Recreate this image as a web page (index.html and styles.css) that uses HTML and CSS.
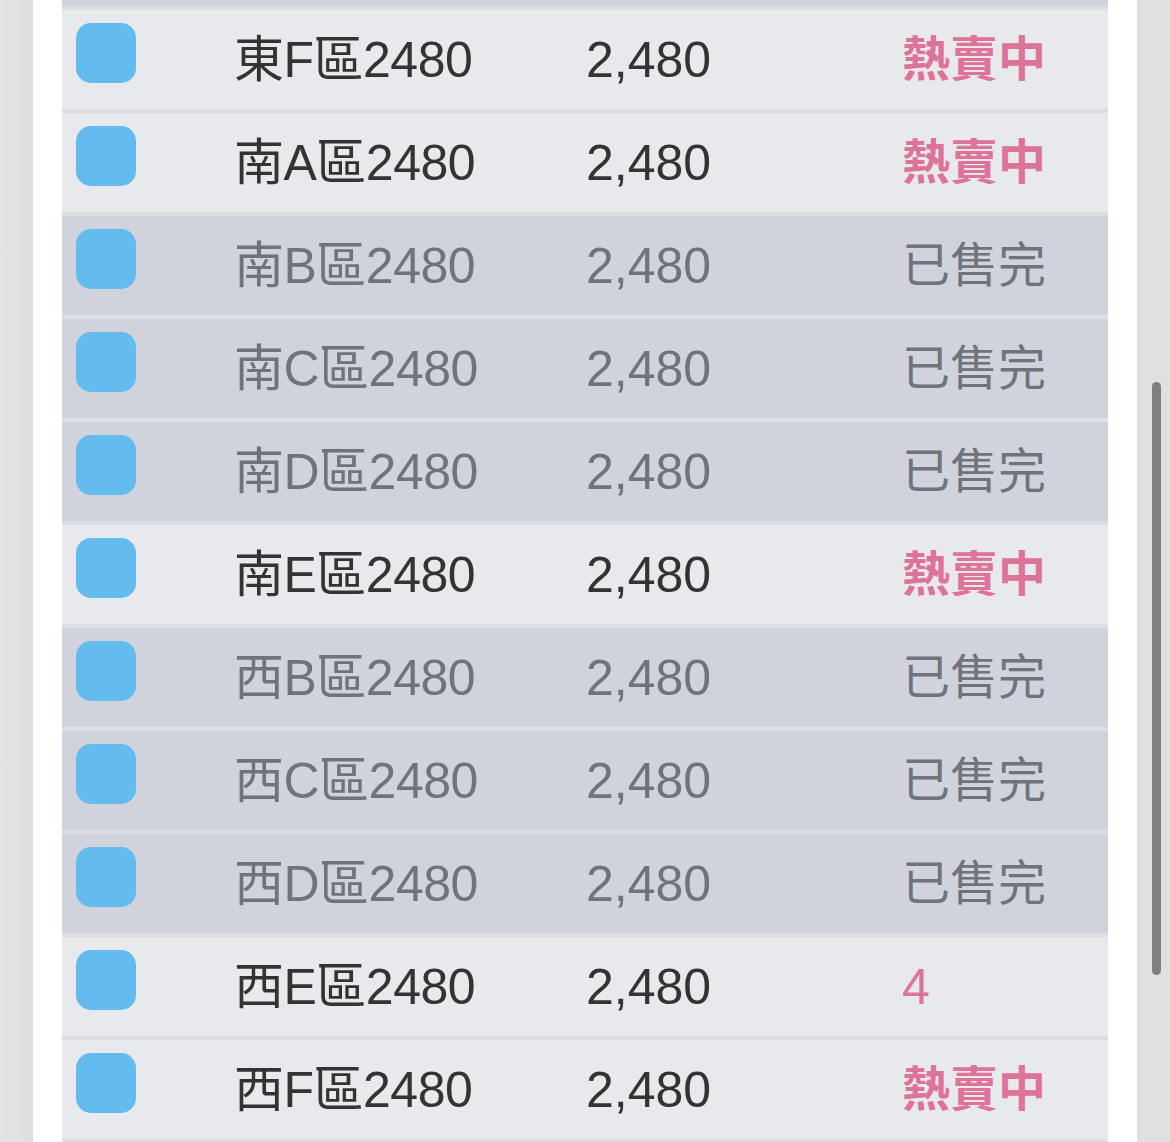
FILE: index.html
```html
<!DOCTYPE html>
<html lang="zh-Hant">
<head>
<meta charset="utf-8">
<link rel="stylesheet" href="styles.css">
</head>
<body>
<div class="screen">
  <div class="side side-left"></div>
  <main class="panel">
    <div class="list">
      <div class="row-edge sold"></div>
      <div class="row"><span class="check"></span><span class="name">東F區2480</span><span class="price">2,480</span><span class="status hot">熱賣中</span></div>
      <div class="row"><span class="check"></span><span class="name">南A區2480</span><span class="price">2,480</span><span class="status hot">熱賣中</span></div>
      <div class="row sold"><span class="check"></span><span class="name">南B區2480</span><span class="price">2,480</span><span class="status">已售完</span></div>
      <div class="row sold"><span class="check"></span><span class="name">南C區2480</span><span class="price">2,480</span><span class="status">已售完</span></div>
      <div class="row sold"><span class="check"></span><span class="name">南D區2480</span><span class="price">2,480</span><span class="status">已售完</span></div>
      <div class="row"><span class="check"></span><span class="name">南E區2480</span><span class="price">2,480</span><span class="status hot">熱賣中</span></div>
      <div class="row sold"><span class="check"></span><span class="name">西B區2480</span><span class="price">2,480</span><span class="status">已售完</span></div>
      <div class="row sold"><span class="check"></span><span class="name">西C區2480</span><span class="price">2,480</span><span class="status">已售完</span></div>
      <div class="row sold"><span class="check"></span><span class="name">西D區2480</span><span class="price">2,480</span><span class="status">已售完</span></div>
      <div class="row"><span class="check"></span><span class="name">西E區2480</span><span class="price">2,480</span><span class="status hot num">4</span></div>
      <div class="row"><span class="check"></span><span class="name">西F區2480</span><span class="price">2,480</span><span class="status hot">熱賣中</span></div>
      <div class="row-edge next"></div>
    </div>
  </main>
  <div class="side side-right"><div class="thumb"></div></div>
</div>
</body>
</html>
```
FILE: styles.css
```css
html, body {
  margin: 0;
  padding: 0;
  height: 100%;
  overflow: hidden;
  background: #e0e0e0;
}
.screen {
  display: flex;
  width: 1170px;
  height: 1142px;
  overflow: hidden;
  font-family: "Liberation Sans", "Noto Sans CJK TC", sans-serif;
}
.side {
  flex: 0 0 33px;
  background: #e0e0e0;
  position: relative;
}
.side-left {
  background: linear-gradient(to right, #e4e4e4, #dedede);
}
.thumb {
  position: absolute;
  left: 15px;
  top: 382px;
  width: 9px;
  height: 593px;
  border-radius: 5px;
  background: #808080;
}
.panel {
  flex: 1;
  background: #ffffff;
  padding: 0 29px;
  overflow: hidden;
}
.row-edge {
  height: 6px;
  background: #e8e9ed;
}
.row-edge.sold {
  background: #d0d3db;
}
.row-edge.next {
  height: 20px;
  border-top: 4px solid #dcdee3;
}
.row {
  display: grid;
  grid-template-columns: 174px 350px 318px 1fr;
  align-items: center;
  height: 99px;
  border-top: 4px solid #dcdee3;
  background: #e8e9ed;
  color: #333333;
  font-size: 50px;
  line-height: 1;
}
.row.sold {
  background: #d0d3db;
  color: #6f747b;
}
.check {
  align-self: start;
  width: 60px;
  height: 60px;
  margin: 13px 0 0 14px;
  border-radius: 15px;
  background: #63bced;
}
.name, .price, .status {
  white-space: nowrap;
}
.name {
  margin-left: -2px;
  letter-spacing: -0.5px;
}
.status {
  font-size: 48px;
  margin-left: -2px;
}
.status.hot {
  color: #de7399;
  font-weight: 700;
}
.status.num {
  font-size: 50px;
  font-weight: 400;
}
```
